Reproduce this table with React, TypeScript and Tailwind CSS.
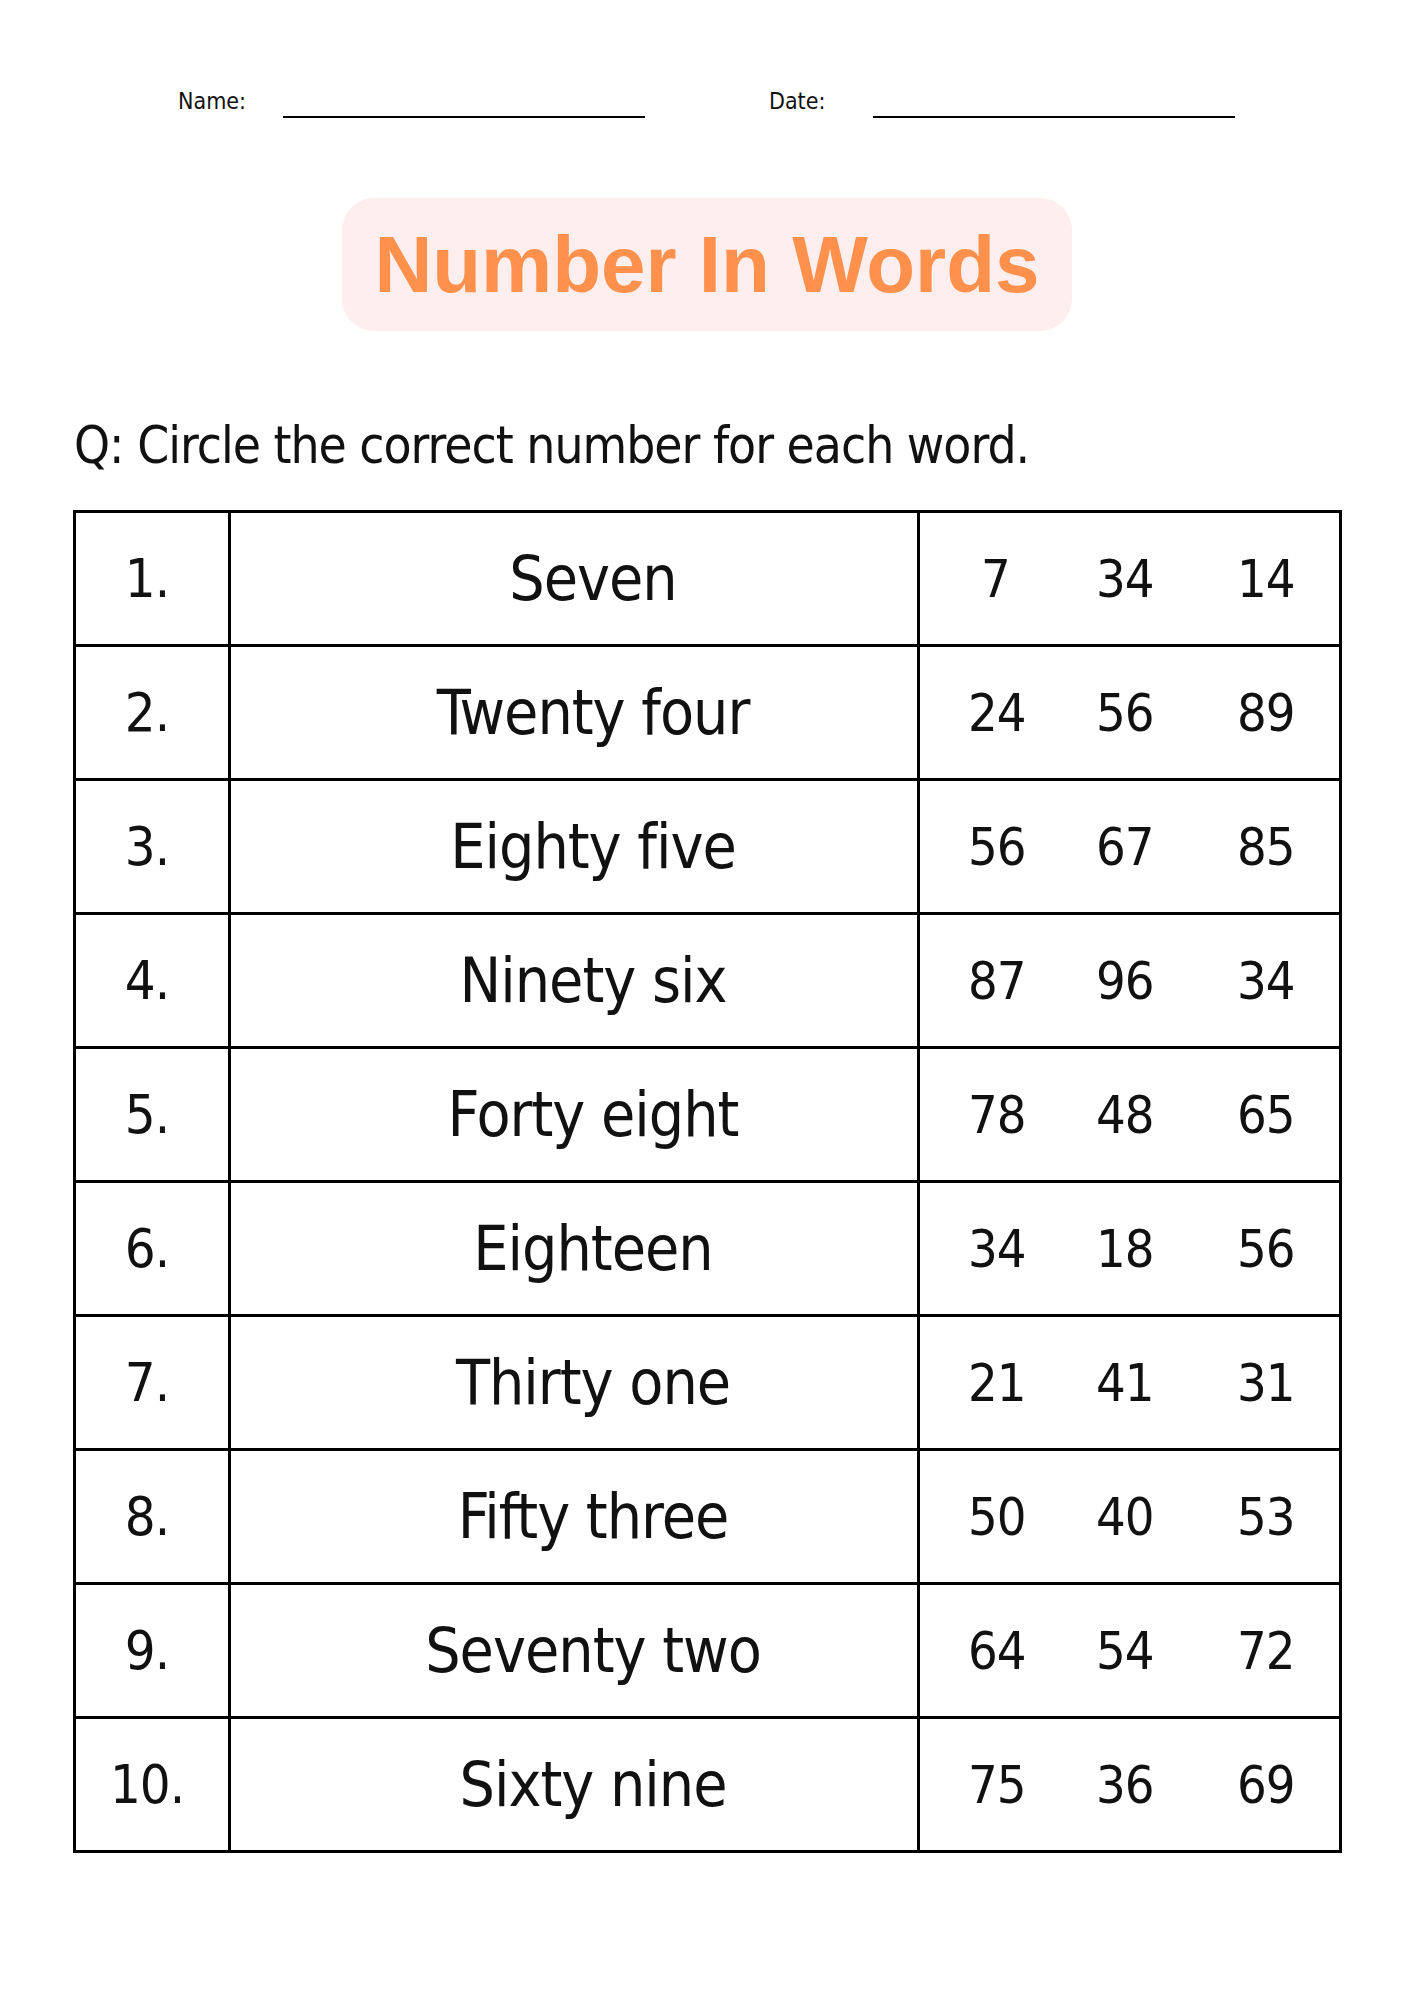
import React from 'react';

type Row = { n: string; word: string; opts: [string, string, string] };

const rows: Row[] = [
  { n: '1.', word: 'Seven', opts: ['7', '34', '14'] },
  { n: '2.', word: 'Twenty four', opts: ['24', '56', '89'] },
  { n: '3.', word: 'Eighty five', opts: ['56', '67', '85'] },
  { n: '4.', word: 'Ninety six', opts: ['87', '96', '34'] },
  { n: '5.', word: 'Forty eight', opts: ['78', '48', '65'] },
  { n: '6.', word: 'Eighteen', opts: ['34', '18', '56'] },
  { n: '7.', word: 'Thirty one', opts: ['21', '41', '31'] },
  { n: '8.', word: 'Fifty three', opts: ['50', '40', '53'] },
  { n: '9.', word: 'Seventy two', opts: ['64', '54', '72'] },
  { n: '10.', word: 'Sixty nine', opts: ['75', '36', '69'] },
];

const narrow = "font-['DejaVu_Sans_Condensed','Liberation_Sans_Narrow',sans-serif]";

const App: React.FC = () => {
  return (
    <div className="min-h-[2000px] w-[1414px] bg-white text-[#111]">
      {/* name / date */}
      <div className={`flex items-start pt-[88px] pl-[178px] ${narrow}`}>
        <span className="w-[105px] text-[23px] leading-[26px]">Name:</span>
        <div className="mt-[28px] h-[2px] w-[362px] bg-black" />
        <span className="ml-[124px] w-[104px] text-[23px] leading-[26px]">Date:</span>
        <div className="mt-[28px] h-[2px] w-[362px] bg-black" />
      </div>

      {/* title */}
      <div className="mx-auto mt-[80px] flex h-[133px] w-[730px] items-center justify-center rounded-[32px] bg-[#feeeee]">
        <h1 className="font-['Liberation_Sans',Arial,sans-serif] text-[80px] font-bold leading-none text-[#ff914d]">
          Number In Words
        </h1>
      </div>

      <p className={`mt-[85px] pl-[74px] text-[51px] leading-[60px] tracking-[-1px] ${narrow}`}>
        Q: Circle the correct number for each word.
      </p>

      {/* table */}
      <div className={`ml-[73px] mt-[34px] w-[1269px] border-[3px] border-black ${narrow}`}>
        {rows.map((r, i) => (
          <div key={r.n} className={`flex h-[131px] ${i > 0 ? 'h-[134px] border-t-[3px] border-black' : ''}`}>
            <div className="flex w-[155px] items-center justify-center border-r-[3px] border-black pr-[10px] text-[54px] leading-none tracking-[-1px]">
              {r.n}
            </div>
            <div className="flex w-[689px] items-center justify-center border-r-[3px] border-black pl-[38px] text-[62px] leading-none tracking-[-1px]">
              {r.word}
            </div>
            <div className="flex flex-1 items-center pl-[48px] text-[52px] leading-none tracking-[-1px]">
              <span className="w-[55px] text-center">{r.opts[0]}</span>
              <span className="ml-[73px] w-[55px] text-center">{r.opts[1]}</span>
              <span className="ml-[86px] w-[55px] text-center">{r.opts[2]}</span>
            </div>
          </div>
        ))}
      </div>
    </div>
  );
};

export default App;
